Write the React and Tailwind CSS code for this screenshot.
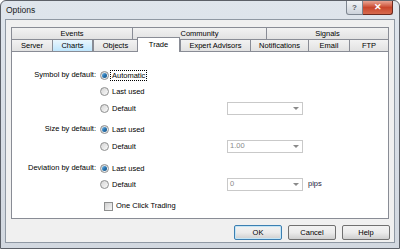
import React from 'react';

const font = { fontFamily: '"Liberation Sans", Arial, sans-serif' };

function Radio({ checked }) {
  return (
    <span className="relative flex h-[9px] w-[9px] shrink-0 items-center justify-center rounded-full border border-[#8e8f8f] bg-gradient-to-br from-[#d4d4d4] to-[#fbfbfb]">
      {checked && (
        <span className="h-[5px] w-[5px] rounded-full bg-gradient-to-br from-[#7cc0ec] via-[#2a77b4] to-[#16507f]" />
      )}
    </span>
  );
}

function Checkbox() {
  return (
    <span className="flex h-[9px] w-[9px] shrink-0 items-center justify-center border border-[#8e8f8f] bg-white">
      <span className="h-[7px] w-[7px] bg-gradient-to-br from-[#cfcfcf] to-[#f6f6f6]" />
    </span>
  );
}

function Select({ value }) {
  return (
    <div className="flex h-[13px] w-[76px] items-center justify-between border border-[#c9c9c9] bg-white pl-[2px] pr-[3px] text-[7.5px] text-[#8a8a8a]">
      <span>{value}</span>
      <span className="h-0 w-0 border-x-[3px] border-t-[3px] border-x-transparent border-t-[#8a8a8a]" />
    </div>
  );
}

function Option({ label, checked, focus, h, extra }) {
  return (
    <div className={`flex items-center ${h}`}>
      <div className="flex w-[127px] items-center">
        <Radio checked={checked} />
        <span className={`ml-[2px] px-[1px] leading-[9px] ${focus ? 'outline outline-1 outline-dotted outline-black' : ''}`}>
          {label}
        </span>
      </div>
      {extra}
    </div>
  );
}

function Group({ label, children, className = '' }) {
  return (
    <div className={`flex ${className}`}>
      <div className="w-[88px] pr-[4px] pt-[3px] text-right leading-[10px]">{label}</div>
      <div className="flex flex-col">{children}</div>
    </div>
  );
}

function Tab({ label, w, active, hover, last }) {
  let cls = 'flex items-center justify-center border-t border-l border-[#898c95] text-[7.5px] ';
  if (last) cls += 'border-r ';
  if (active) {
    cls += 'relative z-10 -mt-[2px] -mb-px h-[15px] border-r bg-white';
  } else if (hover) {
    cls += 'h-[12px] border-[#3c7fb1] border-r bg-gradient-to-b from-[#eaf6fd] to-[#bee6fd]';
  } else {
    cls += 'h-[12px] bg-gradient-to-b from-[#f2f2f2] to-[#e2e2e2]';
  }
  return (
    <div className={cls} style={{ width: w }}>
      {label}
    </div>
  );
}

function Button({ label, def }) {
  return (
    <div
      className={`flex h-[15px] w-[48px] items-center justify-center rounded-[2px] border text-[7.5px] bg-gradient-to-b from-[#f2f2f2] via-[#ebebeb] to-[#cfcfcf] ${
        def ? 'border-[#3c7fb1] shadow-[inset_0_0_0_1px_#c4e5f6]' : 'border-[#707070]'
      }`}
    >
      {label}
    </div>
  );
}

export default function App() {
  return (
    <div
      className="flex h-[249px] w-[400px] flex-col overflow-hidden rounded-t-[6px] border border-[#5c6068] bg-gradient-to-b from-[#dfe5ec] via-[#d8dee6] to-[#d2d8e0] text-black"
      style={font}
    >
      <div className="flex h-[18px] shrink-0 items-start">
        <span className="pl-[5px] pt-[4px] text-[8.5px] leading-[10px] text-[#1a1a1a]">Options</span>
        <div className="ml-auto mr-[6px] flex">
          <div className="flex h-[14px] w-[17px] items-center justify-center rounded-bl-[3px] border border-t-0 border-[#7d8590] bg-gradient-to-b from-[#f1f3f6] to-[#cdd3db] text-[8px] font-bold text-[#5a5f66]">
            ?
          </div>
          <div className="flex h-[14px] w-[30px] items-center justify-center rounded-br-[3px] border border-l-0 border-t-0 border-[#6b2a20] bg-gradient-to-b from-[#e8a493] via-[#c9462c] to-[#d66a4e] text-[9px] font-bold text-white">
            ✕
          </div>
        </div>
      </div>

      <div className="mx-[4px] flex flex-1 flex-col border border-[#8f98a3] bg-[#f0f0f0] pl-[5px] pr-[4px] pt-[7px]">
        <div className="flex">
          <Tab label="Events" w={121} />
          <Tab label="Community" w={134} />
          <Tab label="Signals" w={123} last />
        </div>
        <div className="flex items-end">
          <Tab label="Server" w={41} />
          <Tab label="Charts" w={41} hover />
          <Tab label="Objects" w={44} />
          <Tab label="Trade" w={43} active />
          <Tab label="Expert Advisors" w={70} />
          <Tab label="Notifications" w={58} />
          <Tab label="Email" w={41} />
          <Tab label="FTP" w={40} last />
        </div>

        <div className="flex h-[168px] w-[378px] flex-col border border-[#898c95] bg-white pt-[15px] text-[7.5px]">
          <Group label="Symbol by default:">
            <Option label="Automatic" checked focus h="h-[16px]" />
            <Option label="Last used" h="h-[17px]" />
            <Option label="Default" h="h-[16px]" extra={<Select value="" />} />
          </Group>
          <Group label="Size by default:" className="mt-[5px]">
            <Option label="Last used" checked h="h-[17px]" />
            <Option label="Default" h="h-[16px]" extra={<Select value="1.00" />} />
          </Group>
          <Group label="Deviation by default:" className="mt-[6px]">
            <Option label="Last used" checked h="h-[16px]" />
            <Option
              label="Default"
              h="h-[16px]"
              extra={
                <div className="flex items-center">
                  <Select value="0" />
                  <span className="ml-[5px] text-[#1e2340]">pips</span>
                </div>
              }
            />
          </Group>
          <div className="mt-[6px] flex h-[16px] items-center pl-[92px]">
            <Checkbox />
            <span className="ml-[3px]">One Click Trading</span>
          </div>
        </div>

        <div className="mt-[6px] flex justify-end gap-[6px] pr-[0px]">
          <Button label="OK" def />
          <Button label="Cancel" />
          <Button label="Help" />
        </div>
      </div>
      <div className="h-[5px] shrink-0" />
    </div>
  );
}
